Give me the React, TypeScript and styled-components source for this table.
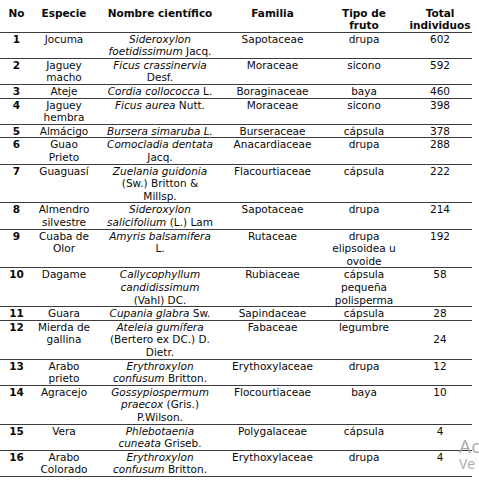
import React from "react";
import styled, { createGlobalStyle } from "styled-components";

const Global = createGlobalStyle`
  html, body { margin: 0; padding: 0; background: #ffffff; }
  body { font-family: "DejaVu Sans", Verdana, sans-serif; color: #000; }
`;

const Page = styled.div`
  position: relative;
  width: 479px;
  height: 487px;
  overflow: hidden;
  background: #fff;
`;

const Table = styled.table`
  border-collapse: collapse;
  table-layout: fixed;
  width: 472px;
  font-family: "DejaVu Sans", Verdana, sans-serif;
  font-size: 10.5px;
  line-height: 12.6px;
  color: #0a0a0a;
`;

const HeadCell = styled.th<{ $w: number }>`
  width: ${(p) => p.$w}px;
  padding: 6.5px 0 0 0;
  font-weight: bold;
  text-align: center;
  vertical-align: top;
  white-space: nowrap;
  border-bottom: 1px solid #3c3c3c;
`;

const Row = styled.tr``;

const Cell = styled.td<{ $bold?: boolean }>`
  padding: 0;
  text-align: center;
  vertical-align: top;
  white-space: nowrap;
  font-weight: ${(p) => (p.$bold ? "bold" : "normal")};
  border-bottom: 1px solid #3c3c3c;
`;

const I = styled.i`
  font-style: italic;
`;

const Watermark = styled.div`
  position: absolute;
  left: 459px;
  top: 437px;
  font-family: "Open Sans", "Liberation Sans", sans-serif;
  color: #ababab;
  line-height: 1;
  pointer-events: none;
`;

const WmTitle = styled.div`
  font-size: 19px;
  height: 19px;
  letter-spacing: 0.3px;
`;

const WmSub = styled.div`
  font-size: 14px;
  margin-top: 1px;
`;

type RowData = {
  no: string;
  esp: React.ReactNode;
  nom: React.ReactNode;
  fam: React.ReactNode;
  tipo: React.ReactNode;
  total: React.ReactNode;
};

const rows: RowData[] = [
  { no: "1", esp: "Jocuma", nom: (<><I>Sideroxylon</I><br /><I>foetidissimum</I> Jacq.</>), fam: "Sapotaceae", tipo: "drupa", total: "602" },
  { no: "2", esp: (<>Jaguey<br />macho</>), nom: (<><I>Ficus crassinervia</I><br />Desf.</>), fam: "Moraceae", tipo: "sicono", total: "592" },
  { no: "3", esp: "Ateje", nom: (<><I>Cordia collococca</I> L.</>), fam: "Boraginaceae", tipo: "baya", total: "460" },
  { no: "4", esp: (<>Jaguey<br />hembra</>), nom: (<><I>Ficus aurea</I> Nutt.</>), fam: "Moraceae", tipo: "sicono", total: "398" },
  { no: "5", esp: "Almácigo", nom: (<I>Bursera simaruba L.</I>), fam: "Burseraceae", tipo: "cápsula", total: "378" },
  { no: "6", esp: (<>Guao<br />Prieto</>), nom: (<><I>Comocladia dentata</I><br />Jacq.</>), fam: "Anacardiaceae", tipo: "drupa", total: "288" },
  { no: "7", esp: "Guaguasí", nom: (<><I>Zuelania guidonia</I><br />(Sw.) Britton &amp;<br />Millsp.</>), fam: "Flacourtiaceae", tipo: "cápsula", total: "222" },
  { no: "8", esp: (<>Almendro<br />silvestre</>), nom: (<><I>Sideroxylon</I><br /><I>salicifolium</I> (L.) Lam</>), fam: "Sapotaceae", tipo: "drupa", total: "214" },
  { no: "9", esp: (<>Cuaba de<br />Olor</>), nom: (<><I>Amyris balsamifera</I><br />L.</>), fam: "Rutaceae", tipo: (<>drupa<br />elipsoidea u<br />ovoide</>), total: "192" },
  { no: "10", esp: "Dagame", nom: (<><I>Callycophyllum</I><br /><I>candidissimum</I><br />(Vahl) DC.</>), fam: "Rubiaceae", tipo: (<>cápsula<br />pequeña<br />polisperma</>), total: "58" },
  { no: "11", esp: "Guara", nom: (<><I>Cupania glabra</I> Sw.</>), fam: "Sapindaceae", tipo: "cápsula", total: "28" },
  { no: "12", esp: (<>Mierda de<br />gallina</>), nom: (<><I>Ateleia gumífera</I><br />(Bertero ex DC.) D.<br />Dietr.</>), fam: "Fabaceae", tipo: "legumbre", total: (<><br />24</>) },
  { no: "13", esp: (<>Arabo<br />prieto</>), nom: (<><I>Erythroxylon</I><br /><I>confusum</I> Britton.</>), fam: "Erythoxylaceae", tipo: "drupa", total: "12" },
  { no: "14", esp: "Agracejo", nom: (<><I>Gossypiospermum</I><br /><I>praecox</I> (Gris.)<br />P.Wilson.</>), fam: "Flocourtiaceae", tipo: "baya", total: "10" },
  { no: "15", esp: "Vera", nom: (<><I>Phlebotaenia</I><br /><I>cuneata</I> Griseb.</>), fam: "Polygalaceae", tipo: "cápsula", total: "4" },
  { no: "16", esp: (<>Arabo<br />Colorado</>), nom: (<><I>Erythroxylon</I><br /><I>confusum</I> Britton.</>), fam: "Erythoxylaceae", tipo: "drupa", total: "4" },
];

export default function App() {
  return (
    <Page>
      <Global />
      <Table>
        <thead>
          <tr>
            <HeadCell $w={33}>No</HeadCell>
            <HeadCell $w={62}>Especie</HeadCell>
            <HeadCell $w={130}>Nombre científico</HeadCell>
            <HeadCell $w={95}>Familia</HeadCell>
            <HeadCell $w={88}>Tipo de<br />fruto</HeadCell>
            <HeadCell $w={64}>Total<br />individuos</HeadCell>
          </tr>
        </thead>
        <tbody>
          {rows.map((r) => (
            <Row key={r.no}>
              <Cell $bold>{r.no}</Cell>
              <Cell>{r.esp}</Cell>
              <Cell>{r.nom}</Cell>
              <Cell>{r.fam}</Cell>
              <Cell>{r.tipo}</Cell>
              <Cell>{r.total}</Cell>
            </Row>
          ))}
        </tbody>
      </Table>
      <Watermark>
        <WmTitle>Ac</WmTitle>
        <WmSub>Ve</WmSub>
      </Watermark>
    </Page>
  );
}
